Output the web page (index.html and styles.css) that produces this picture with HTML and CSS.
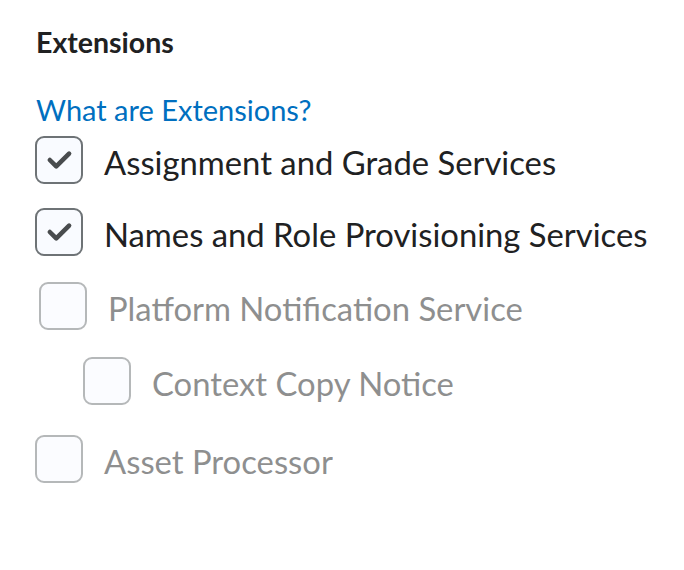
FILE: index.html
```html
<!DOCTYPE html>
<html>
<head>
<meta charset="utf-8">
<link rel="stylesheet" href="styles.css">
</head>
<body>
<main class="panel">
  <h2 class="title">Extensions</h2>
  <a class="help" href="#">What are Extensions?</a>
  <ul class="list">
    <li class="item">
      <span class="box checked"><svg viewBox="0 0 48 48" class="tick"><path d="M14 24 L21 31 L35 17"/></svg></span>
      <span class="label">Assignment and Grade Services</span>
    </li>
    <li class="item">
      <span class="box checked"><svg viewBox="0 0 48 48" class="tick"><path d="M14 24 L21 31 L35 17"/></svg></span>
      <span class="label">Names and Role Provisioning Services</span>
    </li>
    <li class="item disabled shift">
      <span class="box"></span>
      <span class="label">Platform Notification Service</span>
    </li>
    <li class="item disabled sub">
      <span class="box"></span>
      <span class="label">Context Copy Notice</span>
    </li>
    <li class="item disabled last">
      <span class="box"></span>
      <span class="label">Asset Processor</span>
    </li>
  </ul>
</main>
</body>
</html>
```
FILE: styles.css
```css
html, body {
  margin: 0;
  padding: 0;
  background: #ffffff;
}
body {
  font-family: Lato, "Liberation Sans", sans-serif;
  color: #202122;
}
.panel {
  padding: 25px 0 0 36px;
  display: flex;
  flex-direction: column;
  align-items: flex-start;
}
.title {
  margin: 0;
  font-size: 28.5px;
  font-weight: 700;
  line-height: 34px;
}
.help {
  margin-top: 34px;
  color: #006fbf;
  text-decoration: none;
  font-size: 29px;
  line-height: 34px;
}
.list {
  list-style: none;
  margin: 9px 0 0 0;
  padding: 0;
  display: flex;
  flex-direction: column;
  gap: 24px;
}
.item {
  display: flex;
  align-items: center;
  gap: 21px;
  margin-left: -1px;
  height: 48px;
}
.box {
  box-sizing: border-box;
  width: 48px;
  height: 48px;
  border: 2px solid #6e7376;
  border-radius: 9px;
  background: #f9fbff;
  flex: none;
  display: flex;
}
.tick {
  width: 44px;
  height: 44px;
}
.tick path {
  fill: none;
  stroke: #494c4e;
  stroke-width: 5;
  stroke-linecap: round;
  stroke-linejoin: round;
}
.label {
  font-size: 32.8px;
  line-height: 40px;
  padding-top: 5px;
  white-space: nowrap;
}
.disabled {
  opacity: 0.5;
}
.shift {
  margin-left: 3px;
  margin-top: 2px;
}
.sub {
  margin-left: 47px;
  margin-top: 3px;
}
.last {
  margin-top: 6px;
}
```
